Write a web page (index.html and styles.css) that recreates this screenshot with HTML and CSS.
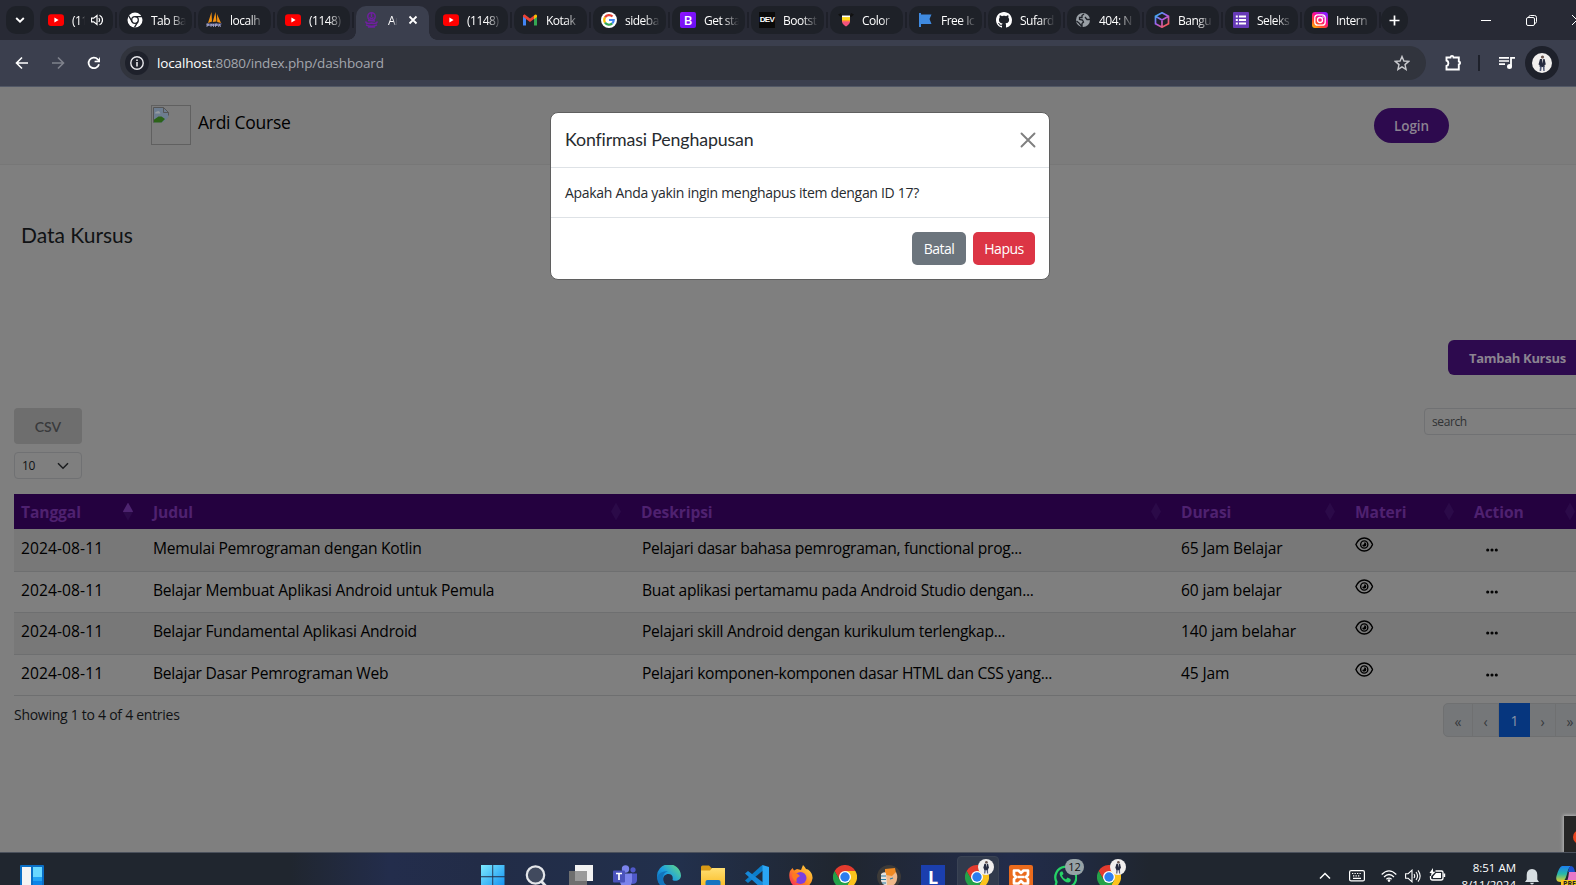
FILE: index.html
```
<!DOCTYPE html>
<html lang="id">
<head>
<meta charset="utf-8">
<title>Ardi Course</title>
<link rel="stylesheet" href="styles.css">
</head>
<body>
<svg class="defs" aria-hidden="true">
  <defs>
    <linearGradient id="g-win" x1="0" y1="0" x2="1" y2="1"><stop offset="0" stop-color="#7deaff"/><stop offset="1" stop-color="#0d8cf0"/></linearGradient>
    <linearGradient id="g-edge" x1="0" y1="1" x2="1" y2="0"><stop offset="0" stop-color="#0c59a4"/><stop offset=".5" stop-color="#1b9de2"/><stop offset="1" stop-color="#6ae07c"/></linearGradient>
    <linearGradient id="g-fold" x1="0" y1="0" x2="0" y2="1"><stop offset="0" stop-color="#ffdf73"/><stop offset="1" stop-color="#f9b91f"/></linearGradient>
    <linearGradient id="g-ff" x1="1" y1="0" x2="0" y2="1"><stop offset="0" stop-color="#ffe14a"/><stop offset=".5" stop-color="#ff8a1f"/><stop offset="1" stop-color="#f5156c"/></linearGradient>
    <linearGradient id="g-ig" x1="0" y1="1" x2=".7" y2="0"><stop offset="0" stop-color="#ffc400"/><stop offset=".35" stop-color="#ff4a2a"/><stop offset=".65" stop-color="#ff0a90"/><stop offset="1" stop-color="#8a1cff"/></linearGradient>
    <linearGradient id="g-cube" x1="0" y1="0" x2=".8" y2="1"><stop offset="0" stop-color="#1fc3f0"/><stop offset=".5" stop-color="#a45cf0"/><stop offset="1" stop-color="#ff5a4a"/></linearGradient>
    <linearGradient id="g-cop" x1="0" y1="0" x2="0" y2="1"><stop offset="0" stop-color="#1c7ff0"/><stop offset=".5" stop-color="#28b8a8"/><stop offset="1" stop-color="#f2d021"/></linearGradient>
    <symbol id="yt" viewBox="0 0 16 16"><rect y="2.3" width="16" height="11.6" rx="3" fill="#f00"/><path d="M6.4 5.6v4.9L10.6 8z" fill="#fff"/></symbol>
    <symbol id="chrome" viewBox="0 0 24 24"><path d="M12 6h10.4A12 12 0 0 0 1.6 6l5.2 9z" fill="#e33b2e"/><path d="M17.2 15 12 24A12 12 0 0 0 22.4 6H12z" fill="#fcc31c"/><path d="M6.8 15 1.6 6A12 12 0 0 0 12 24l5.2-9z" fill="#24a148"/><circle cx="12" cy="12" r="6" fill="#fff"/><circle cx="12" cy="12" r="4.7" fill="#2b7df0"/></symbol>
    <symbol id="person" viewBox="0 0 20 20"><circle cx="10" cy="10" r="10" fill="#f1efee"/><circle cx="10.5" cy="4" r="1.600" fill="#6b5650"/><path d="M8 6h4.600l1.200 5.500-1.200.5v2H7.700l-.2-2-1-.5z" fill="#262b40"/><path d="M8 13.500h1.800l-.6 4.500H7.600zM10.800 13.500h1.700l.2 4.500h-1.400z" fill="#555e7c"/><path d="m10 6 .6 4.500.7-4.500z" fill="#ddd"/></symbol>
    <symbol id="eye" viewBox="0 0 20 16"><g fill="none" stroke="#000" stroke-width="1.5"><path d="M1 8c4-9.300 14-9.300 18 0-4 9.300-14 9.300-18 0z"/><circle cx="10" cy="8" r="3.900"/></g><path d="M10 5.700a2.300 2.300 0 1 1-2.300 2.600c1.600.5 2.700-.5 2.300-2.600z" fill="#000"/></symbol>
    <symbol id="dots" viewBox="0 0 12 4"><g fill="#050505"><circle cx="1.700" cy="2" r="1.550"/><circle cx="6" cy="2" r="1.550"/><circle cx="10.300" cy="2" r="1.550"/></g></symbol>
  </defs>
</svg>

<header class="tabs">
  <div class="tab-search"><svg width="10" height="8" viewBox="0 0 10 8"><path d="m1.200 2 3.800 3.600L8.800 2" fill="none" stroke="#fff" stroke-width="1.900"/></svg></div>
  <div class="tab"><svg><use href="#yt"/></svg><span class="short">(1148)</span><svg class="sound" viewBox="0 0 12 12"><path d="M.5 4.200h2.200L6 1.500v9L2.700 7.800H.500z" fill="none" stroke="#fff" stroke-width="1.200"/><path d="M7.800 4q1.500 2 0 4M8.500 1.200c4 1.800 4 7.800 0 9.600" fill="none" stroke="#fff" stroke-width="1.200"/></svg></div>
  <div class="tab"><svg viewBox="0 0 16 16"><circle cx="8" cy="8" r="7.500" fill="#fff"/><circle cx="8" cy="8" r="3.300" fill="#fff" stroke="#1e2128" stroke-width="1.300"/><path d="M8 4.700h7M5.100 9.700 1.700 3.800M10.900 9.700 7.500 15.400" stroke="#1e2128" stroke-width="1.300"/></svg><span>Tab Ba</span></div>
  <div class="tab"><svg viewBox="0 0 16 16"><path d="M5.500 0 6 9.500 2 11zM9.500 0l1 9.500L6.700 10zM11 2l4 9-3.800-1z" fill="#f29111"/><path d="M0 11.500h16l-2 2.500H1.500z" fill="#6a6d9d"/><path d="M1 15v-3h1.500v1.300H1M5 15v-3l1.300 1.500L7.500 12v3M9.500 15v-3H11v1.300H9.500m3 1.700 1-3 1 3" stroke="#aaabc8" fill="none" stroke-width=".8"/></svg><span>localh</span></div>
  <div class="tab"><svg><use href="#yt"/></svg><span>(1148)</span></div>
  <div class="tab active"><svg viewBox="0 0 16 16"><g fill="none" stroke="#6f1fa0"><circle cx="7.500" cy="4.500" r="3.700" stroke-width="1.500"/><path d="M5.500 5.500q2 2 4 0M7.500 1v4M1.500 9.500q1 3 6 1.500 5 1.500 6-1.500M2 12.800q5.500 3 11 0M4 8.500l7 .5M4 15h7" stroke-width="1.500"/></g></svg><span class="mini">Ardi</span><svg class="x" viewBox="0 0 10 10"><path d="m1.500 1.500 7 7m0-7-7 7" stroke="#fff" stroke-width="1.800"/></svg></div>
  <div class="tab"><svg><use href="#yt"/></svg><span>(1148)</span></div>
  <div class="tab"><svg viewBox="0 0 16 16"><path d="M1 13.500V4h3v9.500z" fill="#4285f4"/><path d="M12 13.500V4h3v9.500z" fill="#34a853"/><path d="m1 3.500 1.500-1.200L8 6.500l4-3V7l-4 3-7-5.200z" fill="#ea4335"/><path d="M12 3.500q2-1.800 3 0V5l-3 2.200z" fill="#fbbc04"/></svg><span>Kotak</span></div>
  <div class="tab"><svg viewBox="0 0 16 16"><circle cx="8" cy="8" r="8" fill="#fff"/><g fill="none" stroke-width="2.200"><path d="M4 5.400a4.700 4.700 0 0 1 7.500-.8" stroke="#ea4335"/><path d="M4 5.400a5 5 0 0 0 0 5.200" stroke="#fbbc04"/><path d="M4 10.600a4.700 4.700 0 0 0 7.200.8" stroke="#34a853"/><path d="M8 8h4.700q0 2.200-1.500 3.400" stroke="#4285f4"/></g></svg><span>sideba</span></div>
  <div class="tab"><span class="fav fav-b">B</span><span>Get sta</span></div>
  <div class="tab"><span class="fav fav-dev">DEV</span><span>Bootst</span></div>
  <div class="tab"><svg viewBox="0 0 16 16"><path d="M0 2.500 3 1l1 2.500h8L13 1l3 1.500-2.500 2.200h-11z" fill="#111"/><path d="M4 4.700h8v4.500l-4 5-4-5z" fill="#ffd91a"/><path d="M4 8h8v1.500h-8z" fill="#ff9b2b"/><path d="M4 9.200h8Q12 12 8 14.600 4 12 4 9.200z" fill="#f4517c"/><path d="M4 3.500h8v1.600H4z" fill="#fff"/></svg><span>Color</span></div>
  <div class="tab"><svg viewBox="0 0 16 16"><path d="M2 1h2v1.500h10.500L12.500 7l2 5H4v3H2z" fill="#3f8ae0"/></svg><span>Free Ic</span></div>
  <div class="tab"><svg viewBox="0 0 16 16"><path fill="#fff" d="M8 0C3.580 0 0 3.580 0 8c0 3.540 2.290 6.530 5.470 7.590.4.070.55-.17.55-.38 0-.19-.01-.82-.01-1.490-2.010.37-2.530-.49-2.690-.94-.09-.23-.48-.94-.82-1.130-.28-.15-.68-.52-.01-.53.63-.01 1.080.58 1.230.82.72 1.210 1.870.87 2.330.66.07-.52.28-.87.51-1.070-1.780-.2-3.640-.89-3.640-3.950 0-.87.31-1.590.82-2.150-.08-.2-.36-1.020.08-2.120 0 0 .67-.21 2.200.82.64-.18 1.320-.27 2-.27s1.360.09 2 .27c1.530-1.040 2.200-.82 2.200-.82.44 1.100.16 1.920.08 2.120.51.56.82 1.270.82 2.150 0 3.070-1.870 3.750-3.650 3.950.29.25.54.73.54 1.480 0 1.070-.01 1.930-.01 2.200 0 .21.15.46.55.38A8.010 8.010 0 0 0 16 8c0-4.420-3.580-8-8-8z"/></svg><span>Sufard</span></div>
  <div class="tab"><svg viewBox="0 0 16 16"><circle cx="8" cy="8" r="7" fill="#9aa0a6"/><path d="M9 2 7 3.500v2H4.500v2l3 .5 1 2-1.500 1.500v3L4 11 1.500 9M10 5l2 2.500h3" fill="none" stroke="#1e2128" stroke-width="1.300"/></svg><span>404: N</span></div>
  <div class="tab"><svg viewBox="0 0 16 16"><path d="M8 .8 14.500 4.300v7.400L8 15.200 1.500 11.700V4.300zM1.500 4.300 8 8l6.500-3.700M8 8v7.200" fill="none" stroke="url(#g-cube)" stroke-width="1.700"/></svg><span>Bangu</span></div>
  <div class="tab"><svg viewBox="0 0 16 16"><rect width="16" height="16" rx="1" fill="#673ab7"/><path d="M2.800 4.500h2M2.800 8h2M2.800 11.500h2M6 4.500h7M6 8h7M6 11.500h7" stroke="#fff" stroke-width="1.900"/></svg><span>Seleks</span></div>
  <div class="tab last"><svg viewBox="0 0 16 16"><rect width="16" height="16" rx="3" fill="url(#g-ig)"/><rect x="2.800" y="2.800" width="10.400" height="10.400" rx="3" fill="none" stroke="#fff" stroke-width="1.300"/><circle cx="8" cy="8" r="2.500" fill="none" stroke="#fff" stroke-width="1.300"/><circle cx="11" cy="5" r=".8" fill="#fff"/></svg><span>Intern</span></div>
  <div class="tab-new"><svg width="11" height="11" viewBox="0 0 11 11"><path d="M5.500.500v10M.500 5.500h10" stroke="#fff" stroke-width="1.700"/></svg></div>
  <div class="win-btns">
    <svg width="10" height="10" viewBox="0 0 10 10"><path d="M0 5.500h10" stroke="#fff"/></svg>
    <svg width="11" height="11" viewBox="0 0 11 11"><g fill="none" stroke="#fff"><rect x=".500" y="2.500" width="8" height="8" rx="1.500"/><path d="M2.700 2.500V2Q3 .500 4.500.500h4Q10.500.500 10.500 2.500v4Q10.500 8 9 8.400"/></g></svg>
    <svg width="10" height="10" viewBox="0 0 10 10"><path d="m0 0 10 10M10 0 0 10" stroke="#fff"/></svg>
  </div>
</header>

<nav class="toolbar">
  <svg class="nav-i" width="14" height="14" viewBox="0 0 14 14"><path d="M13 7H1.800M7 1.500 1.500 7 7 12.500" fill="none" stroke="#fff" stroke-width="1.600"/></svg>
  <svg class="nav-i" width="14" height="14" viewBox="0 0 14 14"><path d="M1 7h11.200M7 1.500 12.500 7 7 12.500" fill="none" stroke="#7f828c" stroke-width="1.600"/></svg>
  <svg class="nav-i" width="14" height="14" viewBox="0 0 14 14"><path d="M12 8.300A5.300 5.300 0 1 1 10.800 3.300L12 4.500" fill="none" stroke="#fff" stroke-width="1.800"/><path d="M13 .800v5.400H7.600V4.800L11 4.500z" fill="#fff"/></svg>
  <div class="omnibox">
    <div class="info"><svg width="14" height="14" viewBox="0 0 14 14"><circle cx="7" cy="7" r="6.200" fill="none" stroke="#e8e8ec" stroke-width="1.400"/><path d="M7 6v4.500M7 3.500V5" stroke="#e8e8ec" stroke-width="1.600"/></svg></div>
    <p><b>localhost</b>:8080/index.php/dashboard</p>
    <svg width="16" height="16" viewBox="0 0 16 16"><path d="m8 1.500 1.900 4.500 4.800.4L11 9.600l1.100 4.800L8 11.800l-4.100 2.600L5 9.600 1.300 6.400 6.100 6z" fill="none" stroke="#c8c9cd" stroke-width="1.400"/></svg>
  </div>
  <svg class="ext" width="18" height="18" viewBox="0 0 18 18"><path d="M2.500 3.500h4q.2-1.600 1.500-1.600T9.500 3.500h5.300v4q1.300.3 1.300 1.500t-1.300 1.500v5H2.500V12q1.900-.5 1.900-2.700T2.500 6.500z" fill="none" stroke="#fff" stroke-width="1.900"/></svg>
  <i class="bar"></i>
  <svg class="media" width="16" height="14" viewBox="0 0 16 14"><path d="M0 1.800h10M0 5h10M0 8.200h6" stroke="#fff" stroke-width="1.700"/><path d="M12 10V1.800h4" fill="none" stroke="#fff" stroke-width="1.800"/><circle cx="10.500" cy="10.500" r="2.500" fill="#fff"/></svg>
  <div class="avatar"><svg width="20" height="20"><use href="#person"/></svg></div>
</nav>

<main class="page">
  <header class="site-head">
    <div class="brand">
      <span class="logo"><svg width="16" height="16" viewBox="0 0 16 16"><path d="M.5.5h10l5 5v5l-5 5H.5z" fill="#6d7d90"/><path d="M2 6.500q0-2 2-2 2-1.500 3.500 2z" fill="#959ba1"/><path d="M.5 15.500V13l5-3.500h3L12 12l-3.500 3.500z" fill="#2c6318"/><path d="M10.500.5v5h5M.5 15.500V.5h10l5 5v3" fill="none" stroke="#555"/><path d="M16 9.500 9.500 16H16z" fill="#7c7c7c"/></svg></span>
      <span class="brand-name">Ardi Course</span>
    </div>
    <button class="btn-login">Login</button>
  </header>
  <h2 class="title">Data Kursus</h2>
  <div class="row-add"><button class="btn-add">Tambah Kursus</button></div>
  <div class="tools">
    <div class="left">
      <button class="btn-csv">CSV</button>
      <div class="select"><span>10</span><svg width="12" height="8" viewBox="0 0 12 8"><path d="m1 1.200 5 5 5-5" fill="none" stroke="#1a1c1e" stroke-width="1.500"/></svg></div>
    </div>
    <div class="search">search</div>
  </div>
  <table class="grid">
    <colgroup><col class="c1"><col class="c2"><col class="c3"><col class="c4"><col class="c5"><col class="c6"></colgroup>
    <thead><tr>
      <th><div>Tanggal<i class="sort asc"></i></div></th><th><div>Judul<i class="sort"></i></div></th><th><div>Deskripsi<i class="sort"></i></div></th><th><div>Durasi<i class="sort"></i></div></th><th><div>Materi<i class="sort"></i></div></th><th><div>Action<i class="sort"></i></div></th>
    </tr></thead>
    <tbody>
      <tr class="r1"><td class="date">2024-08-11</td><td>Memulai Pemrograman dengan Kotlin</td><td class="w">Pelajari dasar bahasa pemrograman, functional prog...</td><td class="dur">65 Jam Belajar</td><td><svg class="eye"><use href="#eye"/></svg></td><td><svg class="dots"><use href="#dots"/></svg></td></tr>
      <tr class="r2"><td class="date">2024-08-11</td><td>Belajar Membuat Aplikasi Android untuk Pemula</td><td class="w">Buat aplikasi pertamamu pada Android Studio dengan...</td><td class="dur">60 jam belajar</td><td><svg class="eye"><use href="#eye"/></svg></td><td><svg class="dots"><use href="#dots"/></svg></td></tr>
      <tr class="r3"><td class="date">2024-08-11</td><td>Belajar Fundamental Aplikasi Android</td><td class="w">Pelajari skill Android dengan kurikulum terlengkap...</td><td class="dur">140 jam belahar</td><td><svg class="eye"><use href="#eye"/></svg></td><td><svg class="dots"><use href="#dots"/></svg></td></tr>
      <tr class="r4"><td class="date">2024-08-11</td><td>Belajar Dasar Pemrograman Web</td><td class="w">Pelajari komponen-komponen dasar HTML dan CSS yang...</td><td class="dur">45 Jam</td><td><svg class="eye"><use href="#eye"/></svg></td><td><svg class="dots"><use href="#dots"/></svg></td></tr>
    </tbody>
  </table>
  <footer class="foot">
    <span class="showing">Showing 1 to 4 of 4 entries</span>
    <div class="pager"><span class="p1">«</span><span class="p2">‹</span><span class="on">1</span><span class="p2">›</span><span class="p1">»</span></div>
  </footer>

  <section class="modal">
    <div class="m-head"><h5>Konfirmasi Penghapusan</h5><svg width="16" height="16" viewBox="0 0 16 16"><path d="m1.500 1.500 13 13m0-13-13 13" stroke="#7f7f7f" stroke-width="1.900" stroke-linecap="round"/></svg></div>
    <p class="m-body">Apakah Anda yakin ingin menghapus item dengan ID 17?</p>
    <div class="m-foot"><button class="batal">Batal</button><button class="hapus">Hapus</button></div>
  </section>
  <div class="toast"><i></i></div>
</main>

<footer class="taskbar">
  <svg class="widget" viewBox="0 0 24 24"><rect width="24" height="24" rx="1" fill="#0a6fc6"/><path d="M2 2h9v20H2z" fill="#f4f4f4"/><path d="M13 2h9v10h-9z" fill="#69d8ff"/><path d="M13 12h9v4h-9z" fill="#22a4f5"/><path d="M13 16h9v6h-9z" fill="#0b84e8"/></svg>
  <div class="apps">
    <svg viewBox="0 0 24 24"><path d="M0 0h11.300v11.300H0zM12.200 0h11.300v11.300H12.200zM0 12.200h11.300v11.300H0zM12.200 12.200h11.300v11.300H12.200z" fill="url(#g-win)"/></svg>
    <svg viewBox="0 0 24 24"><circle cx="10.500" cy="10" r="8.700" fill="#414a5e" stroke="#e4e6ea" stroke-width="2.200"/><path d="m16.500 16.500 6 6.500" stroke="#e4e6ea" stroke-width="2.800"/></svg>
    <svg viewBox="0 0 24 24"><path d="M6 0h18v16H6z" fill="#f2f2f2"/><path d="M0 6h18v16H0z" fill="#6f6f6f"/><path d="M6 6h12v10H6z" fill="#9a9a9a"/></svg>
    <svg viewBox="0 0 24 24"><circle cx="20" cy="4.800" r="2.600" fill="#5059c9"/><path d="M17 8.500h7V15q0 4-5 4z" fill="#5059c9"/><circle cx="12.500" cy="4" r="3.700" fill="#7b83eb"/><path d="M7 8.500h12V17q-1 6-6 6-5-1-6-6z" fill="#7b83eb"/><rect y="5.500" width="12" height="12" rx="1" fill="#4b53bc"/><path d="M3 8.500h6M6 8.500v6.500" stroke="#fff" stroke-width="1.700"/></svg>
    <svg viewBox="0 0 24 24"><path d="M0 12A12 12 0 0 1 24 10.500c0 5-5.500 6.500-8.500 4.500 1-4-1-6-4-6-5 0-7 5.500-3.500 10l7 4.500Q1 25 0 12z" fill="url(#g-edge)"/><path d="M6 12q-1 8 6 11.500Q2 23 0 13 2 6 11 6 6 8 6 12z" fill="#1274bd"/></svg>
    <svg viewBox="0 0 24 24"><path d="M0 2q0-1.500 1.500-1.500H8l3 3V7H0z" fill="#d99a15"/><path d="M0 5.500h9l2-2.500h13v20H0z" fill="url(#g-fold)"/><path d="M4.500 23v-6q0-2 2-2h11q2 0 2 2v6z" fill="#1573c0"/></svg>
    <svg viewBox="0 0 24 24"><path d="M18 0v5.500L3 18l-3-2.500L16 1z" fill="#0b7dc9"/><path d="M18 17.500 3 6 0 8.500 17 24z" fill="#1688d8"/><path d="m17.500 0 6.500 2v20l-6.500 2z" fill="#2aa5f4"/></svg>
    <svg viewBox="0 0 24 24"><path d="M1 6 3.500 3l1.500 2.500L8 4l4 1 2-5q2 2 3 4l2 .5q5 4 4.500 9A11.500 11.500 0 0 1 1 15q-1.500-5 0-9z" fill="url(#g-ff)"/><circle cx="11.500" cy="13" r="6" fill="#7b3fe0"/><path d="M3 9q5-2 8 2-5 2-3 6-5-2-5-8z" fill="#ff7a1f"/></svg>
    <svg><use href="#chrome"/></svg>
    <svg viewBox="0 0 24 24"><circle cx="12" cy="12" r="12" fill="#3c3a38"/><path d="m8 4 10-1 1 5-4 4-7 1z" fill="#f08a22"/><path d="m9 10 6 1 4-4q3 6-1 12-5 4-9 1z" fill="#f0b98a"/><path d="M4 9q3-3 5-1l1 12q-4 1-6-4z" fill="#e6e0da"/><path d="M4 11h5M4 14.500h5M5 18h4M13 14l3-1" stroke="#2c7fa8" stroke-width="1.200"/></svg>
    <span class="app-l">L</span>
    <span class="app-on"><svg><use href="#chrome"/></svg><svg class="badge"><use href="#person"/></svg></span>
    <svg viewBox="0 0 24 24"><rect width="24" height="24" rx="2" fill="#ea6b1d"/><path d="M5 5.500h4.500L12 8l2.500-2.500H19v4.300L17 12l2 2.200v4.300h-4.500L12 16l-2.500 2.500H5v-4.300L7 12 5 9.800zM8.500 12h7" fill="none" stroke="#fff" stroke-width="2.700" stroke-linejoin="round"/></svg>
    <span class="app-badge"><svg viewBox="0 0 24 24"><path d="M2 23 3.500 17A10.500 10.500 0 1 1 8 21.500z" fill="none" stroke="#25d366" stroke-width="2.300"/><path d="M8 6.500q-2.500 1.500-.5 5 3.500 6 8 6 3-1 2-3.500l-3-1.500-1.500 2q-3-1-4-4l1.500-1.500L9.500 6.500z" fill="#25d366"/></svg><b class="badge num">12</b></span>
    <span class="app-badge"><svg><use href="#chrome"/></svg><svg class="badge"><use href="#person"/></svg></span>
  </div>
  <div class="tray">
    <svg class="t1" width="12" height="8" viewBox="0 0 12 8"><path d="m1 6.500 5-5 5 5" fill="none" stroke="#fff" stroke-width="1.500"/></svg>
    <svg class="t2" width="16" height="12" viewBox="0 0 16 12"><rect x=".600" y=".600" width="14.800" height="10.300" rx="1.500" fill="none" stroke="#fff" stroke-width="1.200"/><path d="M3 3.500h1.300m1.200 0h1.300m1.200 0h1.300m1.200 0h1.300M4 5.800h1.300m1.200 0h1.300m1.200 0h1.300M4 8.300h8" stroke="#fff" stroke-width="1.200"/></svg>
    <svg class="t3" width="16" height="12" viewBox="0 0 16 12"><g fill="none" stroke="#fff" stroke-width="1.200"><path d="M.700 4.500q7.300-7.200 14.600 0M3 7q5-5 10 0M5.400 9.300q2.600-2.500 5.200 0"/></g><circle cx="8" cy="10.600" r="1.300" fill="#fff"/></svg>
    <svg class="t4" width="16" height="14" viewBox="0 0 16 14"><g fill="none" stroke="#fff" stroke-width="1.100"><path d="M.600 4.700h2.600L7 1.200v11.600L3.200 9.300H.600z"/><path d="M9 5q1.400 2 0 4M11 3q3 4 0 8M13 1.300q4.300 5.700 0 11.400"/></g></svg>
    <svg class="t5" width="17" height="13" viewBox="0 0 17 13"><path d="M6.500 3h6Q14 3 14 4.500v5.500Q14 12 12 12H3.500Q1.500 12 1.500 10V8" fill="none" stroke="#fff" stroke-width="1.300"/><path d="M7 5h5v5H4V8.500zM14.500 5.500h1.700v3.500h-1.700zM4 0 .5 5h2L1.800 8.500 6.500 3.800H4z" fill="#fff"/></svg>
    <div class="clock"><span>8:51 AM</span><span>8/11/2024</span></div>
    <svg class="t6" width="14" height="16" viewBox="0 0 14 16"><path d="M7 0q5.300.5 5.300 6v4.500L14 13H0l1.700-2.500V6Q1.700.5 7 0zM5 13.800h4Q8.500 15.500 7 15.500T5 13.800z" fill="#d7dee2"/></svg>
    <div class="copilot"><svg width="24" height="24" viewBox="0 0 24 24"><path d="M6 0h9q-3 2-4 8-2 8-6 8Q-1 16 .5 10 3 1 6 0z" fill="url(#g-cop)"/><path d="M15 0q3 0 4 6h-7q1-5 3-6z" fill="#1b4fd0"/><path d="M13 6h11v12H9q3-2 4-12z" fill="#e878c8"/></svg><b>PRE</b></div>
  </div>
</footer>
</body>
</html>
```
FILE: styles.css
```
* { box-sizing: border-box; }
body {
  margin: 0; width: 1576px; height: 885px; overflow: hidden;
  display: flex; flex-direction: column;
  font-family: "Open Sans", "Noto Sans", sans-serif; font-size: 14px; color: #101214;
}
button { font: inherit; letter-spacing: inherit; border: 0; padding: 0; }
svg { display: block; flex: none; }
.defs { position: absolute; width: 0; height: 0; }

/* tab strip */
.tabs { height: 40px; flex: none; background: #282a35; display: flex; padding: 6px 0 0 6px; }
.tab-search, .tab-new { width: 28px; height: 28px; border-radius: 10px; background: #1e2128; display: flex; align-items: center; justify-content: center; margin-right: 6px; flex: none; }
.tab-new { width: 27px; border-radius: 14px; margin: 0 0 0 -2px; }
.tab {
  width: 73px; height: 28px; margin-right: 6px; flex: none; position: relative;
  background: #1e2128; border-radius: 10px; display: flex; align-items: center; padding-left: 8px;
  color: #fff; font-size: 12px; letter-spacing: -.5px;
}
.tab::after { content: ""; position: absolute; right: -4px; top: 6px; width: 2px; height: 16px; background: #1e2029; }
.tab svg { width: 16px; height: 16px; }
.tab > span:last-child, .tab .short, .tab .mini {
  margin-left: 8px; width: 35px; overflow: hidden; white-space: nowrap; flex: none;
  -webkit-mask-image: linear-gradient(90deg, #000 55%, transparent); mask-image: linear-gradient(90deg, #000 55%, transparent);
}
.tab .short { width: 13px; -webkit-mask-image: linear-gradient(90deg, #000 65%, transparent); mask-image: linear-gradient(90deg, #000 65%, transparent); }
.tab .mini { width: 9px; }
.tab .sound { width: 12px; height: 12px; margin-left: 6px; }
.tab.active { background: #3b3f4e; height: 34px; border-radius: 10px 10px 0 0; padding-bottom: 6px; }
.tab.active::before { content: ""; position: absolute; left: -8px; bottom: 0; width: 8px; height: 8px; background: radial-gradient(circle at 0 0, transparent 7.5px, #3b3f4e 8px); }
.tab.active::after { left: 73px; right: auto; top: auto; bottom: 0; width: 8px; height: 8px; background: radial-gradient(circle at 100% 0, transparent 7.5px, #3b3f4e 8px); }
.tab .x { width: 10px; height: 10px; margin-left: 11px; }
.fav { width: 16px; height: 16px; flex: none; text-align: center; font-weight: 700; line-height: 16px; letter-spacing: 0; }
.fav-b { background: linear-gradient(135deg, #9013fe, #6610f2); border-radius: 2px; font-size: 13px; font-weight: 600; }
.fav-dev { background: #0a0a0a; font: 700 8px/16px "Liberation Sans", sans-serif; letter-spacing: -.6px; }
.win-btns { display: flex; align-items: center; gap: 35px; height: 28px; margin-left: 73px; }

/* toolbar */
.toolbar { height: 47px; flex: none; background: #3b3f4e; border-bottom: 1px solid #525866; display: flex; align-items: center; padding-left: 15px; }
.nav-i { margin-right: 22px; }
.omnibox { width: 1306px; height: 34px; margin-left: -3px; background: #31343d; border-radius: 17px; display: flex; align-items: center; padding: 0 16px 0 5px; flex: none; }
.info { width: 24px; height: 24px; border-radius: 50%; background: #1e212b; display: flex; align-items: center; justify-content: center; }
.omnibox p { margin: 0 auto 0 8px; font-size: 13.5px; letter-spacing: -.15px; color: #a3a6ad; }
.omnibox b { font-weight: 400; color: #fff; }
.ext { margin-left: 18px; }
.bar { width: 2px; height: 16px; background: #1e212b; margin-left: 16px; }
.media { margin-left: 19px; }
.avatar { width: 34px; height: 34px; border-radius: 50%; background: #1e212b; margin-left: 10px; display: flex; align-items: center; justify-content: center; flex: none; }

/* page */
.page { flex: 1; min-height: 0; background: #7f7f7f; position: relative; overflow: hidden; }
.site-head { height: 78px; background: #7c7c7c; border-bottom: 1px solid #777; display: flex; justify-content: space-between; padding: 18px 127px 0 151px; }
.brand { display: flex; gap: 7px; }
.logo { width: 40px; height: 40px; border: 1px solid #606060; padding: 1px; }
.brand-name { font-size: 17.5px; letter-spacing: -.27px; font-weight: 500; line-height: 24px; margin-top: 5px; color: #000; }
.btn-login { width: 75px; height: 35px; margin-top: 3px; border-radius: 17.5px; background: #2d0a4e; color: #8b8391; font-weight: 600; font-size: 13.5px; letter-spacing: -.1px; }
.title { margin: 56px 0 0 21px; font: 400 21px/28px Lato, sans-serif; color: #101214; }
.row-add { margin: 91px -12px 0 0; display: flex; justify-content: flex-end; }
.btn-add { width: 140px; height: 35px; border-radius: 6px; background: #2d0a4e; color: #8b8391; font-weight: 700; font-size: 13px; letter-spacing: -.3px; text-align: left; padding-left: 21px; white-space: nowrap; }
.tools { display: flex; justify-content: space-between; margin: 33px -12px 0 14px; }
.left { display: flex; flex-direction: column; gap: 8px; }
.btn-csv { width: 68px; height: 36px; border-radius: 4px; background: #6e6e6e; color: #393a3c; font: 600 14px Lato, sans-serif; }
.select { width: 68px; height: 27px; border: 1px solid #707173; border-radius: 4px; display: flex; align-items: center; justify-content: space-between; padding: 0 12px 0 7px; font-size: 12px; letter-spacing: -.3px; }
.search { width: 164px; height: 27px; border: 1px solid #707173; border-radius: 4px; padding: 0 7px; font-size: 12px; line-height: 26px; letter-spacing: -.4px; color: #303234; }

.grid { table-layout: fixed; width: 1574px; margin: 15px 0 0 14px; border-collapse: separate; border-spacing: 0; font-size: 15.6px; color: #000; }
.c1 { width: 132px; } .c2 { width: 488px; } .c3 { width: 540px; } .c4 { width: 174px; } .c5 { width: 119px; } .c6 { width: 121px; }
.grid th { height: 35px; padding: 0 0 0 7px; background: #24013f; color: #4f2170; font-weight: 700; text-align: left; letter-spacing: -.1px; }
.grid th div { display: flex; align-items: center; justify-content: space-between; padding-right: 13px; line-height: 22px; }
.sort { width: 10px; height: 18px; background: #2b0a48; clip-path: polygon(50% 0, 100% 50%, 50% 100%, 0 50%); }
.sort.asc { background: linear-gradient(#4d2470 50%, #2b0a48 50%); }
.grid td { padding: 6px 0 0 7px; height: 41px; line-height: 24px; vertical-align: top; border-bottom: 1px solid #6e6f70; white-space: nowrap; letter-spacing: -.24px; }
.grid td.w { letter-spacing: -.28px; padding-left: 8px; }
.grid td.date { letter-spacing: .08px; }
.grid td.dur { letter-spacing: -.16px; }
.grid .r1 td { height: 43px; padding-top: 7px; } .grid .r3 td { height: 42px; }
.r1 td, .r3 td { background: #787878; }
.eye { width: 18.5px; height: 15px; margin-top: 1px; }
.dots { width: 12px; height: 4px; margin: 12px 0 0 12px; }

.foot { display: flex; justify-content: space-between; margin: 7px -10px 0 14px; }
.showing { font-size: 14px; line-height: 18px; margin-top: 3px; letter-spacing: -.27px; }
.pager { display: flex; height: 34px; border: 1px solid #6f7071; border-radius: 5px; background: #757779; color: #35393d; line-height: 36px; text-align: center; }
.pager span { border-right: 1px solid #6f7071; }
.p1 { width: 29px; } .p2 { width: 26px; }
.pager .on { width: 31px; height: 34px; margin-top: -1px; border: 0; background: #06367e; color: #8b95a6; }

.modal { position: absolute; left: 550px; top: 25px; width: 500px; height: 168px; background: #fff; border: 1px solid #5f5f5f; border-radius: 8px; color: #272b2f; }
.m-head { height: 55px; border-bottom: 1px solid #dee2e6; display: flex; align-items: center; justify-content: space-between; padding: 0 13px 0 14px; }
.m-head h5 { margin: 0 0 2px; font: 400 17.8px Lato, sans-serif; letter-spacing: -.15px; }
.m-body { margin: 0; height: 50px; border-bottom: 1px solid #dee2e6; padding: 0 14px; line-height: 50px; font-size: 14px; letter-spacing: -.3px; }
.m-foot { display: flex; justify-content: flex-end; gap: 7px; padding: 14px 14px; }
.m-foot button { height: 33px; border-radius: 5px; color: #fff; font-weight: 500; font-size: 14px; letter-spacing: -.5px; }
.batal { width: 54px; background: #6c757d; } .hapus { width: 62px; background: #dc3545; }
.toast { position: absolute; right: 0; bottom: 0; width: 12px; height: 36px; background: #252525; box-shadow: 0 0 3px 1px #b5b5b5; overflow: hidden; }
.toast i { display: block; width: 14px; height: 14px; margin: 14px 0 0 9px; border-radius: 50%; background: #e8441c; }

/* taskbar */
.taskbar { height: 33px; flex: none; border-top: 1px solid #4b515c; display: flex; align-items: flex-start; overflow: hidden;
  background: linear-gradient(90deg, #20262f 0, #20262f 290px, #232d4c 390px, #222c47 480px, #22304c 680px, #20262f 840px, #222c4a 1010px, #202a42 1070px, #20262f 1150px); }
.widget { width: 24px; height: 24px; margin: 12px 0 0 20px; }
.apps { display: flex; gap: 20px; margin: 12px 0 0 437px; }
.apps svg { width: 24px; height: 24px; }
.app-l { width: 24px; height: 24px; background: #1b3fae; color: #fff; font-weight: 700; font-size: 18px; line-height: 24px; text-align: center; }
.app-on, .app-badge { position: relative; width: 24px; height: 24px; }
.app-on { z-index: 0; }
.app-on::before { content: ""; position: absolute; z-index: -1; left: -8px; top: -9px; width: 40px; height: 40px; border-radius: 4px; background: #313a4c; border: 1px solid #3a4354; }
.apps .badge { position: absolute; left: 13px; top: -6px; width: 16px; height: 16px; }
.apps .num { left: 12px; width: 19px; background: #96a2a6; border-radius: 8px; color: #111; font-size: 11px; font-weight: 500; line-height: 16px; text-align: center; }
.tray { display: flex; flex: none; margin-left: 198px; }
.t1 { margin: 19px 0 0 0; } .t2 { margin: 17px 0 0 18px; } .t3 { margin: 17px 0 0 16px; }
.t4 { margin: 16px 0 0 8px; } .t5 { margin: 15px 0 0 8px; } .t6 { margin: 16px 0 0 9px; }
.clock { width: 70px; margin: 6px 0 0 0; display: flex; flex-direction: column; align-items: flex-end; color: #fff; font-size: 11.5px; line-height: 17px; }
.copilot { position: relative; margin: 13px 0 0 17px; width: 24px; }
.copilot b { position: absolute; left: 5px; top: 14px; background: #f8c61b; color: #222; font-size: 7px; line-height: 8px; padding: 0 2px; }
```
